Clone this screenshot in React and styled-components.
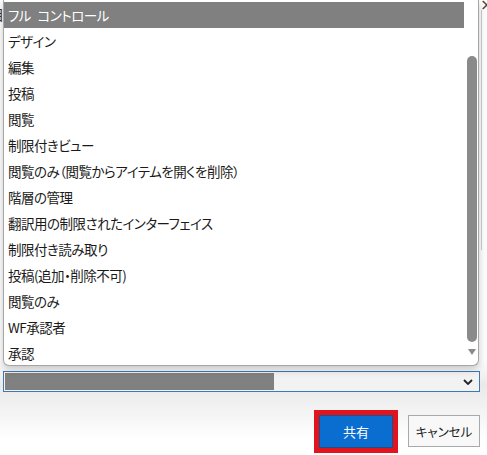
import React from 'react'
import styled, { createGlobalStyle } from 'styled-components'

const GlobalStyle = createGlobalStyle`
  html, body {
    margin: 0;
    padding: 0;
    background: #ffffff;
  }
  body {
    font-family: "Noto Sans CJK JP", "Noto Sans", sans-serif;
    font-feature-settings: "palt";
  }
`;

const roles = [
  'フル コントロール',
  'デザイン',
  '編集',
  '投稿',
  '閲覧',
  '制限付きビュー',
  '閲覧のみ（閲覧からアイテムを開くを削除）',
  '階層の管理',
  '翻訳用の制限されたインターフェイス',
  '制限付き読み取り',
  '投稿(追加・削除不可)',
  '閲覧のみ',
  'WF承認者',
  '承認',
];

export default function App() {
  return (
    <>
      <GlobalStyle />
      <Page>
        <BehindGlyph>目</BehindGlyph>
        <CloseMark>×</CloseMark>
        <DialogEdge />
        <ListBox>
          <Options>
            {roles.map((r, i) => (
              <Option key={r} selected={i === 0}>{r}</Option>
            ))}
          </Options>
          <ScrollTrack>
            <Thumb />
            <DownArrow />
          </ScrollTrack>
        </ListBox>
        <SelectBox>
          <SelectedValue />
          <Chevron viewBox="0 0 10 6">
            <path d="M1 1 L5 5 L9 1" fill="none" stroke="#222" strokeWidth="1.8" />
          </Chevron>
        </SelectBox>
        <Footer>
          <Highlight>
            <PrimaryButton>共有</PrimaryButton>
          </Highlight>
          <SecondaryButton>キャンセル</SecondaryButton>
        </Footer>
      </Page>
    </>
  );
}

const Page = styled.div`
  position: relative;
  width: 487px;
  height: 455px;
  overflow: hidden;
  display: flex;
  flex-direction: column;
  padding-left: 3px;
  box-sizing: border-box;
  background: linear-gradient(180deg, #ffffff 0px, #ffffff 360px, #e9e9e9 385px, #ffffff 440px);
`;

const BehindGlyph = styled.span`
  position: absolute;
  left: -10px;
  top: 4px;
  font-size: 14px;
  color: #333;
`;

const CloseMark = styled.span`
  position: absolute;
  left: 480px;
  top: -5px;
  font-size: 16px;
  font-family: "DejaVu Sans", sans-serif;
  color: #444;
`;

const DialogEdge = styled.div`
  position: absolute;
  left: 481px;
  top: 10px;
  width: 1px;
  height: 240px;
  background: #cfcfcf;
`;

const ListBox = styled.div`
  position: relative;
  z-index: 2;
  width: 476px;
  height: 366px;
  box-sizing: border-box;
  border: 1px solid #a6a6a6;
  border-top: none;
  border-radius: 0 0 6px 6px;
  background: #ffffff;
  box-shadow: 0 3px 8px rgba(0, 0, 0, 0.22);
  display: flex;
  overflow: hidden;
`;

const Options = styled.ul`
  list-style: none;
  margin: 0;
  padding: 2px 0 0 0;
  width: 460px;
`;

const Option = styled.li`
  height: 26px;
  line-height: 26px;
  padding-left: 4px;
  font-size: 13.5px;
  letter-spacing: -0.5px;
  word-spacing: 4px;
  white-space: pre;
  color: ${(p) => (p.selected ? '#ffffff' : '#1a1a1a')};
  background: ${(p) => (p.selected ? '#808080' : 'transparent')};
`;

const ScrollTrack = styled.div`
  flex: 1;
  display: flex;
  flex-direction: column;
  align-items: center;
  padding-top: 56px;
  padding-left: 2px;
`;

const Thumb = styled.div`
  width: 10px;
  height: 286px;
  border-radius: 5px;
  background: #8a8a8a;
`;

const DownArrow = styled.div`
  margin-top: 7px;
  width: 0;
  height: 0;
  border-left: 4px solid transparent;
  border-right: 4px solid transparent;
  border-top: 6px solid #8a8a8a;
`;

const SelectBox = styled.div`
  margin-top: 5px;
  width: 477px;
  height: 21px;
  box-sizing: border-box;
  border: 1px solid #3d7ab3;
  display: flex;
  align-items: center;
  justify-content: space-between;
  padding: 1px 6px 1px 1px;
  background: #f2f2f2;
`;

const SelectedValue = styled.div`
  width: 269px;
  height: 17px;
  background: #808080;
`;

const Chevron = styled.svg`
  width: 10px;
  height: 6px;
`;

const Footer = styled.div`
  margin-top: 18px;
  display: flex;
  justify-content: flex-end;
  align-items: flex-start;
  gap: 10px;
  padding-right: 7px;
`;

const Highlight = styled.div`
  border: 5px solid #e1141e;
`;

const PrimaryButton = styled.button`
  width: 74px;
  height: 33px;
  box-sizing: border-box;
  border: 1px solid #1f5188;
  background: #0a6ed1;
  color: #ffffff;
  font-family: "Noto Sans CJK JP", sans-serif;
  font-size: 13px;
  display: block;
  padding: 0;
`;

const SecondaryButton = styled.button`
  margin-top: 5px;
  width: 72px;
  height: 32px;
  box-sizing: border-box;
  border: 1px solid #a9a9a9;
  background: #f8f8f8;
  color: #222;
  font-family: "Noto Sans CJK JP", sans-serif;
  font-feature-settings: "palt";
  font-size: 12.5px;
  padding: 0;
`;
